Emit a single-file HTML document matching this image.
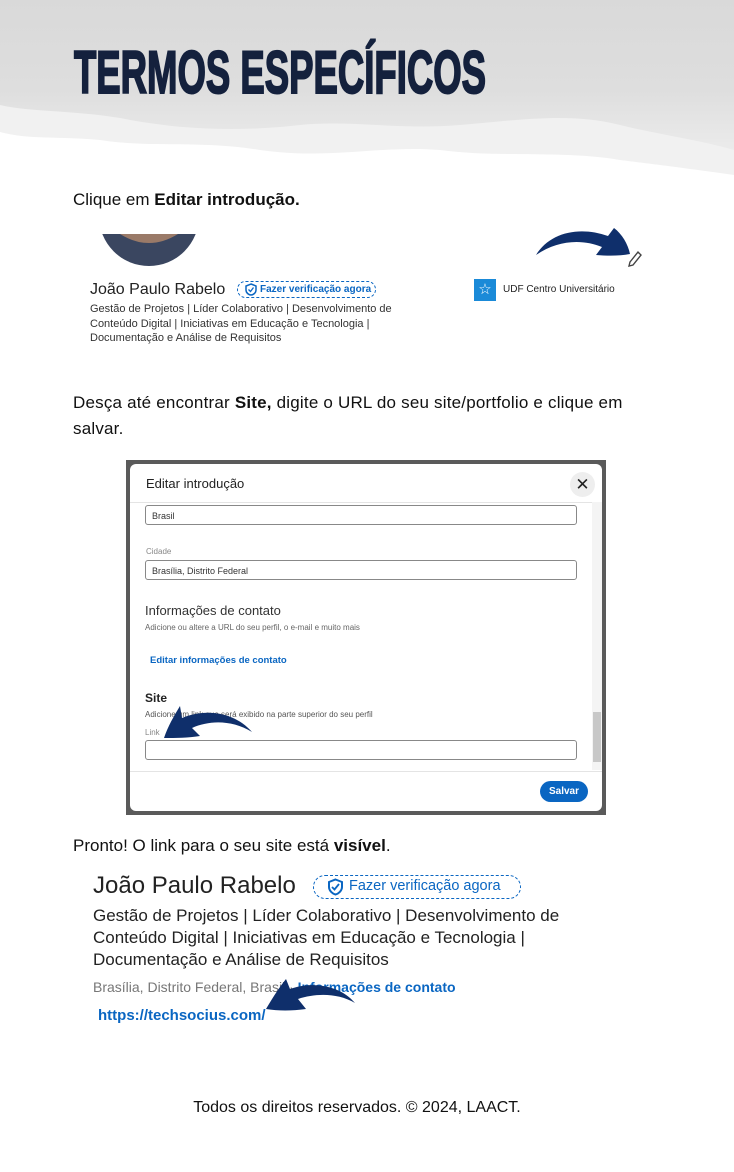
<!DOCTYPE html>
<html><head><meta charset="utf-8"><style>
*{margin:0;padding:0;box-sizing:border-box}
body{width:734px;height:1172px;background:#fff;position:relative;overflow:hidden;font-family:"Liberation Sans",sans-serif;color:#000}
.a{position:absolute;white-space:nowrap}
.t{font-size:17px;color:#111}
.g{color:#333}
</style></head><body>
<svg class="a" style="left:0;top:0" width="734" height="200">
<defs><linearGradient id="bg" x1="0" y1="0" x2="0" y2="1"><stop offset="0" stop-color="#d9d9d9"/><stop offset="0.6" stop-color="#dedede"/><stop offset="1" stop-color="#ebebeb"/></linearGradient></defs>
<path d="M0 0H734V175C700 170 660 165 620 160C560 150 500 158 440 150C380 145 330 160 260 150C200 140 150 148 100 140C60 136 30 140 0 132Z" fill="#f1f1f1"/>
<path d="M0 0H734V150C700 140 660 135 620 125C570 112 520 120 460 125C400 130 350 120 300 125C240 132 180 130 120 118C70 110 30 112 0 105Z" fill="url(#bg)"/>
<text x="74" y="93" textLength="412" lengthAdjust="spacingAndGlyphs" font-family="Liberation Sans Narrow, Liberation Sans, sans-serif" font-weight="bold" font-size="60" fill="#14213d" stroke="#14213d" stroke-width="2">TERMOS ESPECÍFICOS</text>
</svg>
<div class="a t" style="left:73px;top:190px">Clique em <b>Editar introdução.</b></div>

<!-- profile 1 -->
<svg class="a" style="left:95px;top:234px" width="110" height="34"><defs><clipPath id="c1"><rect width="110" height="34"/></clipPath></defs><g clip-path="url(#c1)"><circle cx="54" cy="-18" r="50" fill="#3a4660"/><path d="M25 0Q54 18 83 0Z" fill="#9a7a68"/></g></svg>
<div class="a g" style="left:90px;top:281px;font-size:16px;color:#222">João Paulo Rabelo</div>
<div class="a" style="left:237px;top:281px;width:139px;height:17px;border:1px dashed #0a66c2;border-radius:9px;font-size:10px;color:#0a66c2;padding:2px 0 0 22px;font-weight:bold">Fazer verificação agora</div>
<svg class="a" style="left:245px;top:283px" width="12" height="13"><path d="M6 1L11 3V7C11 10 8 12 6 12C4 12 1 10 1 7V3Z" fill="none" stroke="#0a66c2" stroke-width="1.5"/><path d="M3.5 6.5L5.5 8.5L8.5 4.5" fill="none" stroke="#0a66c2" stroke-width="1.3"/></svg>
<div class="a" style="left:90px;top:302px;font-size:11px;line-height:14.5px;color:#333">Gestão de Projetos | Líder Colaborativo | Desenvolvimento de<br>Conteúdo Digital | Iniciativas em Educação e Tecnologia |<br>Documentação e Análise de Requisitos</div>
<div class="a" style="left:474px;top:279px;width:22px;height:22px;background:#1a8ad8;color:#fff;font-size:15px;text-align:center;line-height:22px">☆</div>
<div class="a" style="left:503px;top:284px;font-size:10px;color:#222">UDF Centro Universitário</div>
<svg class="a" style="left:530px;top:222px" width="115" height="45">
<path d="M6 33C20 10 50 4 78 14L84 6C92 12 98 22 100 32C90 34 78 34 66 33L72 25C52 17 28 18 6 33Z" fill="#0f2f6b"/>
<path d="M100 40L108 30L111 33L103 43L99 44Z" fill="none" stroke="#444" stroke-width="1.4"/>
</svg>

<div class="a t" style="left:73px;top:390px;line-height:26px;letter-spacing:0.2px">Desça até encontrar <b>Site,</b> digite o URL do seu site/portfolio e clique em<br>salvar.</div>

<!-- modal -->
<div class="a" style="left:126px;top:460px;width:480px;height:355px;background:#5a5a5a"></div>
<div class="a" style="left:130px;top:464px;width:472px;height:347px;background:#fff;border-radius:6px"></div>
<div class="a" style="left:146px;top:476px;font-size:13px;color:#222">Editar introdução</div>
<div class="a" style="left:570px;top:472px;width:25px;height:25px;border-radius:50%;background:#eee;text-align:center;line-height:25px;font-size:17px;color:#222">✕</div>
<div class="a" style="left:130px;top:502px;width:472px;height:1px;background:#e4e4e4"></div>
<div class="a" style="left:145px;top:505px;width:432px;height:20px;border:1px solid #888;border-radius:3px;font-size:9px;padding:5px 6px;color:#333">Brasil</div>
<div class="a" style="left:146px;top:547px;font-size:8px;color:#888">Cidade</div>
<div class="a" style="left:145px;top:560px;width:432px;height:20px;border:1px solid #888;border-radius:3px;font-size:9px;padding:5px 6px;color:#333">Brasília, Distrito Federal</div>
<div class="a" style="left:145px;top:603px;font-size:13px;color:#333">Informações de contato</div>
<div class="a" style="left:145px;top:623px;font-size:8px;color:#666">Adicione ou altere a URL do seu perfil, o e-mail e muito mais</div>
<div class="a" style="left:150px;top:655px;font-size:9.5px;color:#0a66c2;font-weight:bold">Editar informações de contato</div>
<div class="a" style="left:145px;top:691px;font-size:12px;color:#222;font-weight:bold">Site</div>
<div class="a" style="left:145px;top:710px;font-size:8px;color:#555">Adicione um link que será exibido na parte superior do seu perfil</div>
<div class="a" style="left:145px;top:728px;font-size:8px;color:#888">Link</div>
<div class="a" style="left:145px;top:740px;width:432px;height:20px;border:1px solid #888;border-radius:3px;background:#fff"></div>
<div class="a" style="left:592px;top:502px;width:10px;height:268px;background:#f4f4f4"></div>
<div class="a" style="left:593px;top:712px;width:8px;height:50px;background:#c8c8c8"></div>
<div class="a" style="left:130px;top:771px;width:472px;height:1px;background:#e4e4e4"></div>
<div class="a" style="left:540px;top:781px;width:48px;height:21px;border-radius:11px;background:#0a66c2;color:#fff;font-size:10px;font-weight:bold;text-align:center;line-height:21px">Salvar</div>
<svg class="a" style="left:160px;top:700px" width="100" height="45"><path d="M92 32C75 12 45 8 22 18L20 6C14 16 8 26 4 38C16 38 28 38 40 36L32 28C50 20 72 20 92 32Z" fill="#0f2f6b"/></svg>

<div class="a t" style="left:73px;top:836px">Pronto! O link para o seu site está <b>visível</b>.</div>

<!-- profile 2 -->
<div class="a" style="left:93px;top:872px;font-size:24px;color:#222">João Paulo Rabelo</div>
<div class="a" style="left:313px;top:875px;width:208px;height:24px;border:1.5px dashed #0a66c2;border-radius:12px;font-size:14.5px;color:#0a66c2;padding:2px 0 0 35px">Fazer verificação agora</div>
<svg class="a" style="left:327px;top:878px" width="17" height="18"><path d="M8.5 1.5L15 4V9C15 13 11 16 8.5 16.5C6 16 2 13 2 9V4Z" fill="none" stroke="#0a66c2" stroke-width="2"/><path d="M5 9L7.5 11.5L12 6" fill="none" stroke="#0a66c2" stroke-width="1.8"/></svg>
<div class="a" style="left:93px;top:905px;font-size:17px;line-height:22px;color:#222">Gestão de Projetos | Líder Colaborativo | Desenvolvimento de<br>Conteúdo Digital | Iniciativas em Educação e Tecnologia |<br>Documentação e Análise de Requisitos</div>
<div class="a" style="left:93px;top:979px;font-size:14px;color:#777">Brasília, Distrito Federal, Brasil · <span style="color:#0a66c2;font-weight:bold">Informações de contato</span></div>
<div class="a" style="left:98px;top:1007px;font-size:15px;color:#0a66c2;font-weight:bold">https://techsocius.com/</div>
<svg class="a" style="left:260px;top:975px" width="100" height="40"><path d="M95 28C80 10 52 6 30 14L26 4C18 14 12 24 6 34C18 36 32 36 46 34L38 24C56 18 78 18 95 28Z" fill="#0f2f6b"/></svg>

<div class="a" style="left:0;width:714px;top:1099px;text-align:center;font-size:16px;color:#111">Todos os direitos reservados. © 2024, LAACT.</div>
</body></html>
